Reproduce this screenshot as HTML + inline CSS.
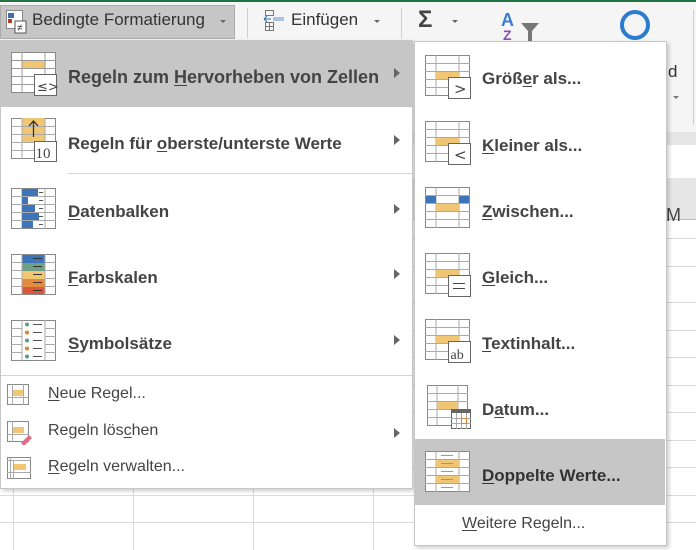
<!DOCTYPE html>
<html><head><meta charset="utf-8"><style>
*{margin:0;padding:0;box-sizing:border-box}
body{width:696px;height:550px;overflow:hidden;background:#fff;position:relative;font-family:"Segoe UI","Liberation Sans",sans-serif;color:#444}
.abs{position:absolute}
.t{position:absolute;font-weight:bold;font-size:17px;color:#444;white-space:nowrap}
.s{position:absolute;font-size:16px;color:#444;white-space:nowrap}
.arr{position:absolute;width:0;height:0;border-top:5px solid transparent;border-bottom:5px solid transparent;border-left:6px solid #666}
u{text-decoration:underline;text-underline-offset:2px}
.hl{position:absolute;left:0;height:1px;background:#d4d4d4}
</style></head><body>
<!-- ribbon -->
<div class="abs" style="left:0;top:0;width:696px;height:132px;background:#f5f5f5"></div>
<div class="abs" style="left:0;top:0;width:696px;height:2px;background:#217346"></div>
<div class="abs" style="left:0;top:5px;width:235px;height:34px;background:#c6c6c6;border:1px solid #acacac"></div>
<svg class="abs" style="left:6px;top:10px" width="22" height="24"><rect x="0.5" y="0.5" width="16" height="18" fill="#fff" stroke="#888"/><rect x="2" y="3" width="6" height="5" fill="#3a6fb5"/><rect x="2" y="9" width="4" height="4" fill="#c0392b"/><rect x="9" y="11" width="11" height="12" fill="#fff" stroke="#555"/><text x="11" y="21" font-size="10" fill="#333" font-family="Liberation Sans">≠</text></svg>
<div class="abs" style="left:32px;top:10px;font-size:17px;color:#333">Bedingte Formatierung</div>
<div class="abs" style="left:220px;top:20px;border-left:3px solid transparent;border-right:3px solid transparent;border-top:3px solid #666"></div>
<div class="abs" style="left:247px;top:8px;width:1px;height:30px;background:#d0d0d0"></div>
<svg class="abs" style="left:263px;top:10px" width="22" height="22"><rect x="2.5" y="0.5" width="8" height="5" fill="none" stroke="#777"/><rect x="2.5" y="12.5" width="8" height="8" fill="none" stroke="#777"/><line x1="6.5" y1="12" x2="6.5" y2="21" stroke="#777"/><line x1="2" y1="16.5" x2="11" y2="16.5" stroke="#777"/><rect x="10" y="7" width="11" height="4" fill="#aac4e0"/><path d="M1 9h7M1 9l3-3M1 9l3 3" stroke="#2b6cb0" fill="none"/></svg>
<div class="abs" style="left:291px;top:10px;font-size:17px;color:#333">Einfügen</div>
<div class="abs" style="left:374px;top:20px;border-left:3px solid transparent;border-right:3px solid transparent;border-top:3px solid #666"></div>
<div class="abs" style="left:401px;top:8px;width:1px;height:30px;background:#d0d0d0"></div>
<div class="abs" style="left:418px;top:6px;font-size:24px;color:#444;font-weight:bold">Σ</div>
<div class="abs" style="left:452px;top:20px;border-left:3px solid transparent;border-right:3px solid transparent;border-top:3px solid #666"></div>
<div class="abs" style="left:501px;top:10px;font-size:18px;color:#3a7bd5;font-weight:bold">A</div>
<div class="abs" style="left:503px;top:27px;font-size:14px;color:#8a4fb5;font-weight:bold">Z</div>
<svg class="abs" style="left:520px;top:22px" width="22" height="20"><path d="M1 1h18l-7 8v10h-4V9z" fill="#777"/></svg>
<svg class="abs" style="left:618px;top:8px" width="40" height="34"><circle cx="17" cy="17" r="13" fill="none" stroke="#2b7bd0" stroke-width="4"/></svg>
<div class="abs" style="left:668px;top:62px;font-size:17px;color:#333">d</div>
<div class="abs" style="left:673px;top:96px;border-left:3px solid transparent;border-right:3px solid transparent;border-top:3px solid #777"></div>
<div class="abs" style="left:693px;top:10px;width:1px;height:115px;background:#ccc"></div>
<div class="abs" style="left:0;top:132px;width:696px;height:13px;background:#e6e6e6"></div>
<div class="abs" style="left:0;top:178px;width:696px;height:42px;background:#e6e6e6;border-bottom:1px solid #bbb"></div>
<div class="abs" style="left:666px;top:205px;font-size:18px;color:#444">M</div>
<!-- grid lines -->
<div class="abs" style="left:0;top:238px;width:696px;height:1px;background:#dadada"></div>
<div class="abs" style="left:0;top:266px;width:696px;height:1px;background:#dadada"></div>
<div class="abs" style="left:0;top:302px;width:696px;height:1px;background:#dadada"></div>
<div class="abs" style="left:0;top:330px;width:696px;height:1px;background:#dadada"></div>
<div class="abs" style="left:0;top:357px;width:696px;height:1px;background:#dadada"></div>
<div class="abs" style="left:0;top:385px;width:696px;height:1px;background:#dadada"></div>
<div class="abs" style="left:0;top:412px;width:696px;height:1px;background:#dadada"></div>
<div class="abs" style="left:0;top:440px;width:696px;height:1px;background:#dadada"></div>
<div class="abs" style="left:0;top:467px;width:696px;height:1px;background:#dadada"></div>
<div class="abs" style="left:0;top:495px;width:696px;height:1px;background:#dadada"></div>
<div class="abs" style="left:0;top:522px;width:696px;height:1px;background:#dadada"></div>
<div class="abs" style="left:13px;top:488px;width:1px;height:62px;background:#dadada"></div>
<div class="abs" style="left:133px;top:488px;width:1px;height:62px;background:#dadada"></div>
<div class="abs" style="left:253px;top:488px;width:1px;height:62px;background:#dadada"></div>
<div class="abs" style="left:373px;top:488px;width:1px;height:62px;background:#dadada"></div>

<!-- left menu -->
<div class="abs" style="left:0;top:40px;width:413px;height:449px;background:#fff;border:1px solid #c6c6c6;box-shadow:2px 2px 4px rgba(0,0,0,.2)"></div>
<div class="abs" style="left:1px;top:41px;width:411px;height:66px;background:#c6c6c6"></div>

<svg class="abs" style="left:11px;top:52px" width="48" height="46"><g stroke="#888" fill="#fff"><rect x="0.5" y="0.5" width="44" height="40"/></g><rect x="11" y="9" width="23" height="7" fill="#f0c674"/><g stroke="#999"><line x1="11" y1="0" x2="11" y2="41"/><line x1="34" y1="0" x2="34" y2="41"/><line x1="0" y1="8.5" x2="45" y2="8.5"/><line x1="0" y1="16.5" x2="45" y2="16.5"/><line x1="0" y1="24.5" x2="45" y2="24.5"/><line x1="0" y1="32.5" x2="45" y2="32.5"/></g><rect x="23.5" y="22.5" width="22" height="21" fill="#fff" stroke="#666"/><text x="26" y="39" font-size="13" fill="#444" font-family="DejaVu Sans">≤&gt;</text></svg>
<div class="t" style="left:68px;top:67px;font-size:18px">Regeln zum <u>H</u>ervorheben von Zellen</div>
<div class="arr" style="left:394px;top:68px"></div>

<svg class="abs" style="left:11px;top:118px" width="48" height="46"><rect x="0.5" y="0.5" width="44" height="40" fill="#fff" stroke="#888"/><rect x="11" y="0" width="23" height="24" fill="#f0c674"/><g stroke="#aaa"><line x1="11" y1="0" x2="11" y2="41"/><line x1="34" y1="0" x2="34" y2="41"/><line x1="0" y1="8.5" x2="45" y2="8.5"/><line x1="0" y1="16.5" x2="45" y2="16.5"/><line x1="0" y1="24.5" x2="45" y2="24.5"/><line x1="0" y1="32.5" x2="45" y2="32.5"/></g><path d="M22.5 3v16M18 8l4.5-5 4.5 5" stroke="#333" fill="none" stroke-width="1.3"/><rect x="23.5" y="23.5" width="22" height="20" fill="#fff" stroke="#666"/><text x="24.5" y="40" font-size="15" fill="#444" font-family="Liberation Serif">10</text></svg>
<div class="t" style="left:68px;top:134px">Regeln für <u>o</u>berste/unterste Werte</div>
<div class="arr" style="left:394px;top:135px"></div>
<div class="hl" style="left:67px;top:173px;width:345px"></div>

<svg class="abs" style="left:11px;top:188px" width="46" height="42"><rect x="0.5" y="0.5" width="44" height="40" fill="#fff" stroke="#888"/><g stroke="#aaa"><line x1="11" y1="0" x2="11" y2="41"/><line x1="34" y1="0" x2="34" y2="41"/><line x1="0" y1="8.5" x2="45" y2="8.5"/><line x1="0" y1="16.5" x2="45" y2="16.5"/><line x1="0" y1="24.5" x2="45" y2="24.5"/><line x1="0" y1="32.5" x2="45" y2="32.5"/></g><g fill="#3e75b8"><rect x="11" y="1" width="16" height="7"/><rect x="11" y="9" width="6" height="7"/><rect x="11" y="17" width="13" height="7"/><rect x="11" y="25" width="17" height="7"/><rect x="11" y="33" width="11" height="7"/></g><g stroke="#555"><line x1="28" y1="4.5" x2="32" y2="4.5"/><line x1="28" y1="12.5" x2="32" y2="12.5"/><line x1="28" y1="20.5" x2="32" y2="20.5"/><line x1="28" y1="28.5" x2="32" y2="28.5"/><line x1="28" y1="36.5" x2="32" y2="36.5"/></g></svg>
<div class="t" style="left:68px;top:202px"><u>D</u>atenbalken</div>
<div class="arr" style="left:394px;top:204px"></div>

<svg class="abs" style="left:11px;top:254px" width="46" height="42"><rect x="0.5" y="0.5" width="44" height="40" fill="#fff" stroke="#888"/><rect x="11" y="1" width="23" height="8" fill="#3e75b8"/><rect x="11" y="9" width="23" height="8" fill="#6fa086"/><rect x="11" y="17" width="23" height="8" fill="#f0c674"/><rect x="11" y="25" width="23" height="8" fill="#e58a3c"/><rect x="11" y="33" width="23" height="7" fill="#d9583a"/><g stroke="#aaa"><line x1="11" y1="0" x2="11" y2="41"/><line x1="34" y1="0" x2="34" y2="41"/><line x1="0" y1="8.5" x2="11" y2="8.5"/><line x1="0" y1="16.5" x2="11" y2="16.5"/><line x1="0" y1="24.5" x2="11" y2="24.5"/><line x1="0" y1="32.5" x2="11" y2="32.5"/><line x1="34" y1="8.5" x2="45" y2="8.5"/><line x1="34" y1="16.5" x2="45" y2="16.5"/><line x1="34" y1="24.5" x2="45" y2="24.5"/><line x1="34" y1="32.5" x2="45" y2="32.5"/></g><g stroke="#333"><line x1="22" y1="4.5" x2="31" y2="4.5"/><line x1="22" y1="12.5" x2="31" y2="12.5"/><line x1="22" y1="20.5" x2="31" y2="20.5"/><line x1="22" y1="28.5" x2="31" y2="28.5"/><line x1="22" y1="36.5" x2="31" y2="36.5"/></g></svg>
<div class="t" style="left:68px;top:268px"><u>F</u>arbskalen</div>
<div class="arr" style="left:394px;top:269px"></div>

<svg class="abs" style="left:11px;top:320px" width="46" height="42"><rect x="0.5" y="0.5" width="44" height="40" fill="#fff" stroke="#888"/><g stroke="#aaa"><line x1="11" y1="0" x2="11" y2="41"/><line x1="34" y1="0" x2="34" y2="41"/><line x1="0" y1="8.5" x2="45" y2="8.5"/><line x1="0" y1="16.5" x2="45" y2="16.5"/><line x1="0" y1="24.5" x2="45" y2="24.5"/><line x1="0" y1="32.5" x2="45" y2="32.5"/></g><rect x="11.5" y="1" width="22" height="39" fill="#fff"/><circle cx="16" cy="4.5" r="2" fill="#5e9e86"/><circle cx="16" cy="12.5" r="2" fill="#e0812c"/><circle cx="16" cy="20.5" r="2" fill="#5e9e86"/><circle cx="16" cy="28.5" r="2" fill="#e0812c"/><circle cx="16" cy="36.5" r="2" fill="#5e9e86"/><g stroke="#555"><line x1="22" y1="4.5" x2="31" y2="4.5"/><line x1="22" y1="12.5" x2="31" y2="12.5"/><line x1="22" y1="20.5" x2="31" y2="20.5"/><line x1="22" y1="28.5" x2="31" y2="28.5"/><line x1="22" y1="36.5" x2="31" y2="36.5"/></g></svg>
<div class="t" style="left:68px;top:334px"><u>S</u>ymbolsätze</div>
<div class="arr" style="left:394px;top:335px"></div>
<div class="hl" style="left:1px;top:375px;width:411px"></div>

<svg class="abs" style="left:7px;top:384px" width="24" height="24"><rect x="0.5" y="0.5" width="21" height="20" fill="#fff" stroke="#888"/><rect x="5" y="6" width="12" height="6" fill="#f0c674"/><g stroke="#aaa"><line x1="5.5" y1="0" x2="5.5" y2="21"/><line x1="16.5" y1="0" x2="16.5" y2="21"/><line x1="0" y1="13.5" x2="22" y2="13.5"/></g></svg>
<div class="s" style="left:48px;top:385px"><u>N</u>eue Regel...</div>
<svg class="abs" style="left:7px;top:421px" width="26" height="24"><rect x="0.5" y="0.5" width="21" height="20" fill="#fff" stroke="#888"/><rect x="5" y="6" width="12" height="6" fill="#f0c674"/><g stroke="#aaa"><line x1="5.5" y1="0" x2="5.5" y2="21"/><line x1="0" y1="13.5" x2="22" y2="13.5"/></g><path d="M14 22l8-8 3 3-8 8z" fill="#e06b8b"/></svg>
<div class="s" style="left:48px;top:422px">Regeln lös<u>c</u>hen</div>
<div class="arr" style="left:394px;top:428px"></div>
<svg class="abs" style="left:7px;top:457px" width="26" height="24"><rect x="0.5" y="0.5" width="23" height="21" fill="#fff" stroke="#888"/><rect x="7" y="7" width="12" height="6" fill="#f0c674"/><g stroke="#aaa"><line x1="3.5" y1="0" x2="3.5" y2="22"/><line x1="6.5" y1="3" x2="6.5" y2="22"/><line x1="0" y1="3.5" x2="24" y2="3.5"/><line x1="0" y1="15.5" x2="24" y2="15.5"/></g></svg>
<div class="s" style="left:48px;top:458px"><u>R</u>egeln verwalten...</div>

<!-- right submenu -->
<div class="abs" style="left:414px;top:41px;width:253px;height:505px;background:#fff;border:1px solid #c6c6c6;box-shadow:2px 2px 4px rgba(0,0,0,.2)"></div>
<div class="abs" style="left:415px;top:439px;width:250px;height:66px;background:#c6c6c6"></div>

<svg class="abs" style="left:425px;top:55px" width="48" height="46"><rect x="0.5" y="0.5" width="44" height="40" fill="#fff" stroke="#888"/><g stroke="#aaa"><line x1="11" y1="0" x2="11" y2="41"/><line x1="34" y1="0" x2="34" y2="41"/><line x1="0" y1="8.5" x2="45" y2="8.5"/><line x1="0" y1="16.5" x2="45" y2="16.5"/><line x1="0" y1="24.5" x2="45" y2="24.5"/><line x1="0" y1="32.5" x2="45" y2="32.5"/></g><rect x="11" y="17" width="23" height="7" fill="#f0c674"/><rect x="23.5" y="22.5" width="22" height="21" fill="#fff" stroke="#666"/><text x="29" y="39" font-size="15" fill="#444" font-family="DejaVu Sans">&gt;</text></svg>
<div class="t" style="left:482px;top:69px">Größ<u>e</u>r als...</div>

<svg class="abs" style="left:425px;top:121px" width="48" height="46"><rect x="0.5" y="0.5" width="44" height="40" fill="#fff" stroke="#888"/><g stroke="#aaa"><line x1="11" y1="0" x2="11" y2="41"/><line x1="34" y1="0" x2="34" y2="41"/><line x1="0" y1="8.5" x2="45" y2="8.5"/><line x1="0" y1="16.5" x2="45" y2="16.5"/><line x1="0" y1="24.5" x2="45" y2="24.5"/><line x1="0" y1="32.5" x2="45" y2="32.5"/></g><rect x="11" y="17" width="23" height="7" fill="#f0c674"/><rect x="23.5" y="22.5" width="22" height="21" fill="#fff" stroke="#666"/><text x="29" y="39" font-size="15" fill="#444" font-family="DejaVu Sans">&lt;</text></svg>
<div class="t" style="left:482px;top:136px"><u>K</u>leiner als...</div>

<svg class="abs" style="left:425px;top:187px" width="48" height="46"><rect x="0.5" y="0.5" width="44" height="40" fill="#fff" stroke="#888"/><g stroke="#aaa"><line x1="11" y1="0" x2="11" y2="41"/><line x1="34" y1="0" x2="34" y2="41"/><line x1="0" y1="8.5" x2="45" y2="8.5"/><line x1="0" y1="16.5" x2="45" y2="16.5"/><line x1="0" y1="24.5" x2="45" y2="24.5"/><line x1="0" y1="32.5" x2="45" y2="32.5"/></g><rect x="1" y="9" width="10" height="7" fill="#3e75b8"/><rect x="34" y="9" width="10" height="7" fill="#3e75b8"/><rect x="11" y="17" width="23" height="7" fill="#f0c674"/></svg>
<div class="t" style="left:482px;top:202px"><u>Z</u>wischen...</div>

<svg class="abs" style="left:425px;top:253px" width="48" height="46"><rect x="0.5" y="0.5" width="44" height="40" fill="#fff" stroke="#888"/><g stroke="#aaa"><line x1="11" y1="0" x2="11" y2="41"/><line x1="34" y1="0" x2="34" y2="41"/><line x1="0" y1="8.5" x2="45" y2="8.5"/><line x1="0" y1="16.5" x2="45" y2="16.5"/><line x1="0" y1="24.5" x2="45" y2="24.5"/><line x1="0" y1="32.5" x2="45" y2="32.5"/></g><rect x="11" y="17" width="23" height="7" fill="#f0c674"/><rect x="23.5" y="22.5" width="22" height="21" fill="#fff" stroke="#666"/><path d="M28 30.5h12M28 35.5h12" stroke="#444"/></svg>
<div class="t" style="left:482px;top:268px"><u>G</u>leich...</div>

<svg class="abs" style="left:425px;top:319px" width="48" height="46"><rect x="0.5" y="0.5" width="44" height="40" fill="#fff" stroke="#888"/><g stroke="#aaa"><line x1="11" y1="0" x2="11" y2="41"/><line x1="34" y1="0" x2="34" y2="41"/><line x1="0" y1="8.5" x2="45" y2="8.5"/><line x1="0" y1="16.5" x2="45" y2="16.5"/><line x1="0" y1="24.5" x2="45" y2="24.5"/><line x1="0" y1="32.5" x2="45" y2="32.5"/></g><rect x="11" y="17" width="23" height="7" fill="#f0c674"/><rect x="23.5" y="22.5" width="22" height="21" fill="#fff" stroke="#666"/><text x="25.5" y="40" font-size="14" fill="#444" font-family="Liberation Serif">ab</text></svg>
<div class="t" style="left:482px;top:334px"><u>T</u>extinhalt...</div>

<svg class="abs" style="left:427px;top:385px" width="48" height="46"><rect x="0.5" y="0.5" width="40" height="40" fill="#fff" stroke="#888"/><g stroke="#aaa"><line x1="10" y1="0" x2="10" y2="41"/><line x1="31" y1="0" x2="31" y2="41"/><line x1="0" y1="8.5" x2="41" y2="8.5"/><line x1="0" y1="16.5" x2="41" y2="16.5"/><line x1="0" y1="24.5" x2="41" y2="24.5"/><line x1="0" y1="32.5" x2="41" y2="32.5"/></g><rect x="10" y="17" width="21" height="7" fill="#f0c674"/><rect x="24.5" y="24.5" width="19" height="19" fill="#fff" stroke="#666"/><rect x="24" y="24" width="20" height="4" fill="#666"/><g stroke="#aaa"><line x1="29.5" y1="28" x2="29.5" y2="44"/><line x1="34.5" y1="28" x2="34.5" y2="44"/><line x1="39.5" y1="28" x2="39.5" y2="44"/><line x1="24" y1="33.5" x2="44" y2="33.5"/><line x1="24" y1="38.5" x2="44" y2="38.5"/></g><rect x="34.5" y="33.5" width="5" height="5" fill="none" stroke="#e0812c"/></svg>
<div class="t" style="left:482px;top:400px">D<u>a</u>tum...</div>

<svg class="abs" style="left:425px;top:451px" width="48" height="46"><rect x="0.5" y="0.5" width="44" height="40" fill="#fff" stroke="#888"/><g stroke="#aaa"><line x1="11" y1="0" x2="11" y2="41"/><line x1="34" y1="0" x2="34" y2="41"/><line x1="0" y1="8.5" x2="45" y2="8.5"/><line x1="0" y1="16.5" x2="45" y2="16.5"/><line x1="0" y1="24.5" x2="45" y2="24.5"/><line x1="0" y1="32.5" x2="45" y2="32.5"/></g><rect x="11" y="9" width="23" height="7" fill="#f0c674"/><rect x="11" y="25" width="23" height="7" fill="#f0c674"/><g stroke="#999"><line x1="16" y1="4.5" x2="28" y2="4.5"/><line x1="16" y1="12.5" x2="28" y2="12.5"/><line x1="16" y1="20.5" x2="28" y2="20.5"/><line x1="16" y1="28.5" x2="28" y2="28.5"/><line x1="16" y1="36.5" x2="28" y2="36.5"/></g></svg>
<div class="t" style="left:482px;top:466px;color:#333"><u>D</u>oppelte Werte...</div>

<div class="s" style="left:462px;top:515px"><u>W</u>eitere Regeln...</div>
</body></html>
